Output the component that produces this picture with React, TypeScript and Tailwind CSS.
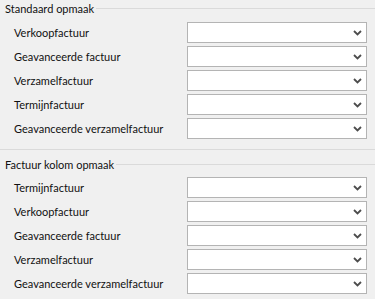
import React from 'react';

const Chevron: React.FC = () => (
  <svg width="9" height="6" viewBox="0 0 9 6" className="shrink-0">
    <path d="M1 1 L4.5 4.5 L8 1" fill="none" stroke="#4d4d4d" strokeWidth="1.8" />
  </svg>
);

const Row: React.FC<{ label: string }> = ({ label }) => (
  <div className="flex items-center h-[21px]">
    <span className="pl-[14px] w-[187px] shrink-0 whitespace-nowrap text-[11px] leading-none text-[#111]">{label}</span>
    <div className="w-[180px] h-[21px] bg-white border border-[#b4b4b4] flex items-center justify-end pr-[4px]">
      <Chevron />
    </div>
  </div>
);

const GroupHeader: React.FC<{ title: string }> = ({ title }) => (
  <div className="flex items-center h-[16px]">
    <span className="pl-[5px] pr-[2px] whitespace-nowrap text-[11px] leading-none text-[#111]">{title}</span>
    <div className="flex-1 h-px bg-[#dadada]" />
  </div>
);

const App: React.FC = () => {
  const standaard = ['Verkoopfactuur', 'Geavanceerde factuur', 'Verzamelfactuur', 'Termijnfactuur', 'Geavanceerde verzamelfactuur'];
  const kolom = ['Termijnfactuur', 'Verkoopfactuur', 'Geavanceerde factuur', 'Verzamelfactuur', 'Geavanceerde verzamelfactuur'];

  return (
    <div className="w-[375px] h-[299px] bg-[#f0f0f0] overflow-hidden" style={{ fontFamily: 'Lato, "Noto Sans", sans-serif' }}>
      <GroupHeader title="Standaard opmaak" />
      <div className="flex flex-col gap-[3px] mt-[6px]">
        {standaard.map((l) => (
          <Row key={l} label={l} />
        ))}
      </div>
      <div className="mt-[10px] h-px bg-[#dadada]" />
      <div className="mt-[6px]">
        <GroupHeader title="Factuur kolom opmaak" />
      </div>
      <div className="flex flex-col gap-[3px] mt-[5px]">
        {kolom.map((l) => (
          <Row key={l} label={l} />
        ))}
      </div>
    </div>
  );
};

export default App;
